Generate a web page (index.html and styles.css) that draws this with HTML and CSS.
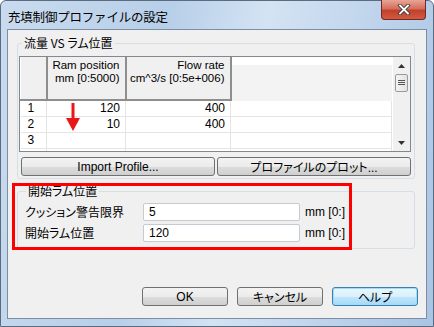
FILE: index.html
```html
<!DOCTYPE html>
<html lang="ja">
<head>
    <meta charset="UTF-8">
    <title>充填制御プロファイルの設定</title>
    <link rel="stylesheet" href="styles.css">
</head>
<body>

<div class="window">
    <!-- タイトルバー -->
    <div class="titlebar">
        <span class="title">充填制御プロファイルの設定</span>
        <div class="close">
            <svg width="14" height="11" viewBox="0 0 14 11">
                <path d="M3 1.5 L11 9.5 M11 1.5 L3 9.5" stroke="#3b3b3b" stroke-width="3.6" stroke-linecap="square"/>
                <path d="M3 1.5 L11 9.5 M11 1.5 L3 9.5" stroke="#ffffff" stroke-width="1.8" stroke-linecap="square"/>
            </svg>
        </div>
    </div>

    <div class="client">
        <fieldset class="group group-flow">
            <legend>流量&nbsp;VS&nbsp;ラム位置</legend>

            <div class="grid">
                <table class="table">
                    <tr class="head">
                        <th class="rowhead"></th>
                        <th class="col-ram">Ram position<br>mm [0:5000)</th>
                        <th class="col-flow">Flow rate<br>cm^3/s [0:5e+006)</th>
                        <td class="filler"></td>
                    </tr>
                    <tr>
                        <td class="num">1</td>
                        <td class="val">120</td>
                        <td class="val">400</td>
                        <td></td>
                    </tr>
                    <tr>
                        <td class="num">2</td>
                        <td class="val">10</td>
                        <td class="val">400</td>
                        <td></td>
                    </tr>
                    <tr>
                        <td class="num">3</td>
                        <td></td>
                        <td></td>
                        <td></td>
                    </tr>
                    <tr class="cut">
                        <td></td><td></td><td></td><td></td>
                    </tr>
                </table>
                <div class="scrollbar">
                    <div class="arrow">
                        <svg width="7" height="4" viewBox="0 0 7 4"><path d="M0 4 L3.5 0 L7 4 Z" fill="#333"/></svg>
                    </div>
                    <div class="thumb">
                        <svg width="7" height="6" viewBox="0 0 7 6"><path d="M0 0.5 H7 M0 2.5 H7 M0 4.5 H7" stroke="#555" stroke-width="1"/></svg>
                    </div>
                    <div class="track"></div>
                    <div class="arrow">
                        <svg width="7" height="4" viewBox="0 0 7 4"><path d="M0 0 L3.5 4 L7 0 Z" fill="#333"/></svg>
                    </div>
                </div>
                <!-- 注釈の赤い矢印 -->
                <svg class="red-arrow" width="14" height="28" viewBox="0 0 14 28">
                    <path d="M7 0 L7 18" stroke="#e81818" stroke-width="3"/>
                    <path d="M0 15 L14 15 L7 28 Z" fill="#e81818"/>
                </svg>
            </div>

            <div class="btn-row">
                <button class="btn wide">Import Profile...</button>
                <button class="btn wide">プロファイルのプロット...</button>
            </div>
        </fieldset>

        <fieldset class="group group-start">
            <legend>開始ラム位置</legend>
            <div class="field">
                <label>クッション警告限界</label>
                <input type="text" value="5">
                <span class="unit">mm [0:]</span>
            </div>
            <div class="field">
                <label>開始ラム位置</label>
                <input type="text" value="120">
                <span class="unit">mm [0:]</span>
            </div>
        </fieldset>

        <!-- 注釈の赤い枠 -->
        <div class="red-box"></div>

        <div class="footer">
            <button class="btn">OK</button>
            <button class="btn">キャンセル</button>
            <button class="btn default">ヘルプ</button>
        </div>
    </div>
</div>

</body>
</html>
```

FILE: styles.css
```css
body {
    margin: 0;
    background-color: #ffffff;
    font-family: "Liberation Sans", "Noto Sans CJK JP", sans-serif;
    font-size: 12px;
    color: #000;
}
.window {
    width: 434px;
    height: 327px;
    box-sizing: border-box;
    border: 1px solid #5b6b80;
    border-radius: 6px 6px 0 0;
    background: linear-gradient(100deg, #c9dbee 0%, #b7cfe9 35%, #d4e3f3 55%, #a9c4e4 100%);
    display: flex;
    flex-direction: column;
}
.titlebar {
    height: 28px;
    display: flex;
    align-items: flex-start;
}
.title {
    font-family: "Noto Sans CJK JP", sans-serif;
    font-size: 12.5px;
    margin: 6px 0 0 7px;
    letter-spacing: -0.2px;
}
.close {
    margin-left: auto;
    margin-right: 7px;
    margin-top: -1px;
    width: 45px;
    height: 20px;
    box-sizing: border-box;
    border: 1px solid #6b2a22;
    border-top: none;
    border-radius: 0 0 4px 4px;
    background: linear-gradient(#e8a595 0%, #d4705c 45%, #c2402c 55%, #d35a40 100%);
    display: flex;
    align-items: center;
    justify-content: center;
}
.client {
    margin: 0 6px 7px 6px;
    flex: 1;
    border: 1px solid #7d8da2;
    background-color: #f0f0f0;
    display: flex;
    flex-direction: column;
    padding-top: 6px;
    position: relative;
}
.group {
    margin: 0 11px 0 9px;
    border: 1px solid #d5dfe5;
    border-radius: 3px;
    padding: 0 3px 2px 1px;
    min-width: 0;
}
.group legend {
    font-family: "Noto Sans CJK JP", sans-serif;
    font-feature-settings: "palt";
    padding: 0 2px;
    margin-left: 3px;
    line-height: 14px;
}
.grid {
    margin-top: 6px;
    height: 96px;
    box-sizing: border-box;
    border: 1px solid #828790;
    background-color: #fff;
    display: flex;
    overflow: hidden;
    position: relative;
}
.table {
    border-collapse: collapse;
    table-layout: fixed;
    width: 372px;
    align-self: flex-start;
}
.table td, .table th {
    padding: 0;
    border: 1px solid #e4e4e4;
    border-top: none;
    border-left: none;
    height: 15px;
    line-height: 15px;
    font-weight: normal;
}
.table .head th {
    height: 43px;
    background-color: #f0f0f0;
    border-left: 1px solid #ffffff;
    border-right: 2px solid #8e8e8e;
    border-bottom: 2px solid #8e8e8e;
    text-align: right;
    vertical-align: top;
    padding: 2px 5px 0 0;
    line-height: 13px;
    font-size: 11.5px;
    white-space: nowrap;
    box-sizing: border-box;
}
.table .head .filler {
    background: linear-gradient(#ffffff 0, #ffffff 8px, #f3f3f3 8px);
    border-bottom: 2px solid #f3f3f3;
    border-right: none;
}
.rowhead {
    width: 26px;
}
.col-ram {
    width: 79px;
}
.col-flow {
    width: 105px;
}
.num {
    padding-left: 7px !important;
}
.val {
    text-align: right;
    padding-right: 5px !important;
}
.table .cut td {
    height: 4px;
}
.scrollbar {
    width: 17px;
    margin-left: auto;
    background-color: #f0f0f0;
    display: flex;
    flex-direction: column;
    align-items: center;
}
.arrow {
    height: 17px;
    display: flex;
    align-items: center;
    justify-content: center;
}
.thumb {
    width: 13px;
    height: 18px;
    box-sizing: border-box;
    border: 1px solid #9a9a9a;
    border-radius: 2px;
    background: linear-gradient(90deg, #f4f4f4, #e2e2e2);
    display: flex;
    align-items: center;
    justify-content: center;
}
.track {
    flex: 1;
}
.red-arrow {
    position: absolute;
    left: 46px;
    top: 46px;
}
.btn-row {
    display: flex;
    gap: 2px;
    margin-top: 5px;
    padding: 0 0 0 2px;
}
.btn {
    height: 19px;
    width: 86px;
    box-sizing: border-box;
    border: 1px solid #707070;
    border-radius: 3px;
    background: linear-gradient(#f3f3f3 0%, #ebebeb 50%, #dddddd 51%, #cfcfcf 100%);
    font-family: "Liberation Sans", "Noto Sans CJK JP", sans-serif;
    font-feature-settings: "palt";
    font-size: 12px;
    padding: 0;
    color: #000;
}
.btn.wide {
    flex: 1;
}
.btn.default {
    border-color: #3c7fb1;
    background: linear-gradient(#eaf6fd 0%, #d9f0fc 50%, #bee6fd 51%, #a7d9f5 100%);
    box-shadow: inset 0 0 0 1px #9fdcfa;
}
.group-start {
    margin-top: 5px;
    padding: 3px 10px 5px 7px;
    font-family: "Noto Sans CJK JP", sans-serif;
    font-feature-settings: "palt";
}
.group-start legend {
    margin-left: 1px;
}
.field {
    display: flex;
    align-items: center;
    height: 21px;
}
.field label {
    width: 118px;
}
.field input {
    width: 157px;
    height: 18px;
    box-sizing: border-box;
    border: 1px solid #c5cbd3;
    border-radius: 2px;
    padding: 0 0 0 5px;
    font-family: "Liberation Sans", sans-serif;
    font-size: 12px;
}
.unit {
    margin-left: 5px;
    font-family: "Liberation Sans", sans-serif;
}
.red-box {
    position: absolute;
    left: 4px;
    top: 153px;
    width: 340px;
    height: 67px;
    box-sizing: border-box;
    border: 3px solid #ff0000;
}
.footer {
    margin-top: auto;
    display: flex;
    justify-content: flex-end;
    gap: 9px;
    padding: 0 8px 12px 0;
}
```
